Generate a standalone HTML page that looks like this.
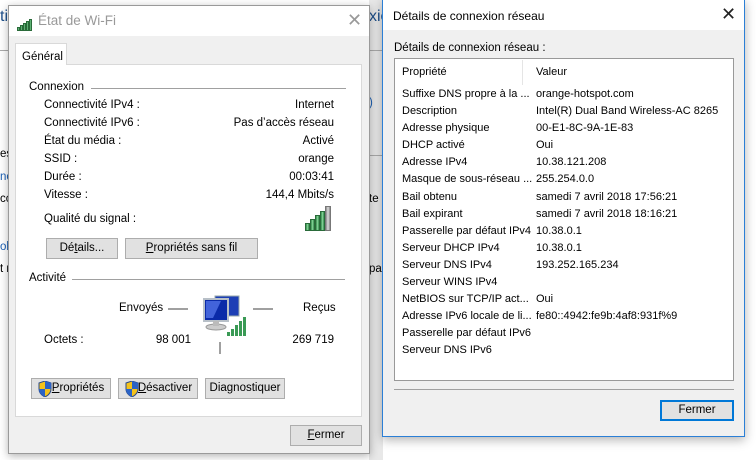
<!DOCTYPE html>
<html><head><meta charset="utf-8"><style>
*{margin:0;padding:0;box-sizing:border-box}
body{width:756px;height:460px;background:#fff;position:relative;overflow:hidden;font-family:"Liberation Sans",sans-serif;font-size:11.5px;color:#000}
.a{position:absolute;white-space:nowrap}
.r{text-align:right}
.btn{position:absolute;background:#e1e1e1;border:1px solid #adadad;text-align:center;line-height:18px;font-size:11.5px}
.bar{position:absolute;background:linear-gradient(90deg,#2e8b47,#8fd8a0 50%,#2e8b47);border:1px solid #2a6b3a}
</style></head><body>
<div class="a" style="left:0;top:8px;font-size:16px;color:#1e4f8a">tic</div>
<div class="a" style="left:0;top:50px;width:8px;height:1px;background:#aaa"></div>
<div class="a" style="left:0;top:148px;color:#000">es</div>
<div class="a" style="left:0;top:171px;color:#1a5fb4">nc</div>
<div class="a" style="left:0;top:193px;color:#000">cc</div>
<div class="a" style="left:0;top:241px;color:#1a5fb4">ob</div>
<div class="a" style="left:0;top:263px;color:#000">t r</div>
<div class="a" style="left:369px;top:0;width:14px;height:460px;background:#e8e8e8"></div>
<div class="a" style="left:369px;top:8px;font-size:16px;color:#1e4f8a">xic</div>
<div class="a" style="left:369px;top:50px;width:14px;height:1px;background:#aaa"></div>
<div class="a" style="left:369px;top:155px;width:14px;height:1px;background:#aaa"></div>
<div class="a" style="left:369px;top:97px;color:#1a5fb4">)</div>
<div class="a" style="left:369px;top:193px">te</div>
<div class="a" style="left:369px;top:263px">pa</div>

<div class="a" style="left:8px;top:5px;width:362px;height:449px;background:#f0f0f0;border:1px solid #9a9a9a;box-shadow:0 2px 8px rgba(0,0,0,.3)">
 <div class="a" style="left:0;top:0;width:360px;height:30px;background:#fff"></div>
 <div class="a" style="left:8px;top:14px;width:17px;height:11px">
  <div class="bar" style="left:0;top:7px;width:3px;height:4px"></div>
  <div class="bar" style="left:3px;top:5px;width:3px;height:6px"></div>
  <div class="bar" style="left:6px;top:3px;width:3px;height:8px"></div>
  <div class="bar" style="left:9px;top:1px;width:3px;height:10px"></div>
  <div class="bar" style="left:12px;top:-1px;width:3px;height:12px"></div>
 </div>
 <div class="a" style="left:29px;top:7px;font-size:13.5px;color:#999">État de Wi-Fi</div>
 <div class="a" style="left:338px;top:4px;font-size:18px;color:#999">✕</div>
 <div class="a" style="left:6px;top:37px;width:52px;height:22px;background:#fff;border:1px solid #d9d9d9;border-bottom:none;z-index:2;padding:8px 0 0 6px;line-height:10px">Général</div>
 <div class="a" style="left:6px;top:58px;width:347px;height:353px;background:#fff;border:1px solid #d9d9d9"></div>
 <div class="a" style="left:20px;top:75px">Connexion</div>
 <div class="a" style="left:82px;top:82px;width:255px;height:1px;background:#a0a0a0"></div>
 <div class="a" style="left:35px;top:93px">Connectivité IPv4 :</div>
 <div class="a" style="left:35px;top:111px">Connectivité IPv6 :</div>
 <div class="a" style="left:35px;top:129px">État du média :</div>
 <div class="a" style="left:35px;top:147px">SSID :</div>
 <div class="a" style="left:35px;top:165px">Durée :</div>
 <div class="a" style="left:35px;top:183px">Vitesse :</div>
 <div class="a" style="left:35px;top:207px">Qualité du signal :</div>
 <div class="a r" style="left:150px;width:175px;top:93px">Internet</div>
 <div class="a r" style="left:150px;width:175px;top:111px">Pas d’accès réseau</div>
 <div class="a r" style="left:150px;width:175px;top:129px">Activé</div>
 <div class="a r" style="left:150px;width:175px;top:147px">orange</div>
 <div class="a r" style="left:150px;width:175px;top:165px">00:03:41</div>
 <div class="a r" style="left:150px;width:175px;top:183px">144,4 Mbits/s</div>
 <div class="a" style="left:296px;top:200px;width:30px;height:25px">
  <div class="bar" style="left:0;top:17px;width:5px;height:8px"></div>
  <div class="bar" style="left:5px;top:13px;width:5px;height:12px"></div>
  <div class="bar" style="left:10px;top:9px;width:5px;height:16px"></div>
  <div class="bar" style="left:15px;top:5px;width:5px;height:20px"></div>
  <div class="a" style="left:20px;top:0;width:6px;height:25px;background:linear-gradient(90deg,#888,#ddd,#888);border:1px solid #777"></div>
 </div>
 <div class="btn" style="left:37px;top:232px;width:72px;height:21px">Dé<u>t</u>ails...</div>
 <div class="btn" style="left:116px;top:232px;width:133px;height:21px"><u>P</u>ropriétés sans fil</div>
 <div class="a" style="left:20px;top:266px">Activité</div>
 <div class="a" style="left:63px;top:273px;width:273px;height:1px;background:#a0a0a0"></div>
 <div class="a" style="left:110px;top:296px">Envoyés</div>
 <div class="a" style="left:159px;top:302px;width:20px;height:2px;background:#a0a0a0"></div>
 <div class="a" style="left:244px;top:302px;width:20px;height:2px;background:#a0a0a0"></div>
 <div class="a" style="left:294px;top:296px">Reçus</div>
 <svg class="a" style="left:192px;top:288px" width="48" height="46" viewBox="0 0 48 46">
  <rect x="14" y="2" width="24" height="20" fill="#1d3fb5" stroke="#9aa" />
  <rect x="3" y="5" width="24" height="22" fill="#0a2aa8" stroke="#b8c0c8" stroke-width="2"/>
  <path d="M5 7 L20 7 L12 24 L5 24Z" fill="#5a7cf0" opacity=".7"/>
  <ellipse cx="15" cy="33" rx="10" ry="3" fill="#ccc" stroke="#999"/>
  <rect x="12" y="27" width="6" height="5" fill="#bbb"/>
  <rect x="26" y="38" width="3" height="4" fill="#3a9a55"/>
  <rect x="30" y="35" width="3" height="7" fill="#3a9a55"/>
  <rect x="34" y="31" width="3" height="11" fill="#3a9a55"/>
  <rect x="38" y="27" width="3" height="15" fill="#3a9a55"/>
  <rect x="42" y="23" width="3" height="19" fill="#3a9a55"/>
 </svg>
 <div class="a" style="left:35px;top:328px">Octets :</div>
 <div class="a r" style="left:110px;width:72px;top:328px">98 001</div>
 <div class="a r" style="left:250px;width:75px;top:328px">269 719</div>
 <div class="a" style="left:210px;top:336px;width:2px;height:12px;background:#a0a0a0"></div>
 <div class="btn" style="left:22px;top:372px;width:80px;height:21px;padding-left:14px"><u>P</u>ropriétés</div>
 <div class="btn" style="left:109px;top:372px;width:80px;height:21px;padding-left:14px"><u>D</u>ésactiver</div>
 <div class="btn" style="left:196px;top:372px;width:80px;height:21px">Diagnostiquer</div>
 <svg class="a" style="left:29px;top:375px" width="14" height="16" viewBox="0 0 14 16"><path d="M7 0 L13 2 L13 8 Q13 13 7 16 Q1 13 1 8 L1 2Z" fill="#f4c21a" stroke="#2a4a8a"/><path d="M7 0 L13 2 L13 8 L7 8Z M7 8 L7 16 Q1 13 1 8Z" fill="#2b63c6"/></svg>
 <svg class="a" style="left:116px;top:375px" width="14" height="16" viewBox="0 0 14 16"><path d="M7 0 L13 2 L13 8 Q13 13 7 16 Q1 13 1 8 L1 2Z" fill="#f4c21a" stroke="#2a4a8a"/><path d="M7 0 L13 2 L13 8 L7 8Z M7 8 L7 16 Q1 13 1 8Z" fill="#2b63c6"/></svg>
 <div class="btn" style="left:281px;top:419px;width:72px;height:21px"><u>F</u>ermer</div>
</div>

<div class="a" style="left:382px;top:-1px;width:363px;height:438px;background:#f0f0f0;border:1px solid #2b7fd6;box-shadow:0 3px 10px rgba(0,0,0,.3)">
 <div class="a" style="left:0;top:0;width:361px;height:30px;background:#fff"></div>
 <div class="a" style="left:10px;top:9px;font-size:12px">Détails de connexion réseau</div>
 <div class="a" style="left:338px;top:4px;font-size:18px;color:#222">✕</div>
 <div class="a" style="left:11px;top:42px">Détails de connexion réseau :</div>
 <div class="a" style="left:11px;top:58px;width:340px;height:323px;background:#fff;border:1px solid #999"></div>
 <div class="a" style="left:139px;top:60px;width:1px;height:25px;background:#e5e5e5"></div>
 <div class="a" style="left:19px;top:66px;font-size:11px">Propriété</div>
 <div class="a" style="left:153px;top:66px;font-size:11px">Valeur</div>
 <div class="a" style="left:19px;top:86px;line-height:17.1px;font-size:11px;width:130px;overflow:hidden">Suffixe DNS propre à la ...<br>Description<br>Adresse physique<br>DHCP activé<br>Adresse IPv4<br>Masque de sous-réseau ...<br>Bail obtenu<br>Bail expirant<br>Passerelle par défaut IPv4<br>Serveur DHCP IPv4<br>Serveur DNS IPv4<br>Serveur WINS IPv4<br>NetBIOS sur TCP/IP act...<br>Adresse IPv6 locale de li...<br>Passerelle par défaut IPv6<br>Serveur DNS IPv6</div>
 <div class="a" style="left:153px;top:86px;line-height:17.1px;font-size:11px">orange-hotspot.com<br>Intel(R) Dual Band Wireless-AC 8265<br>00-E1-8C-9A-1E-83<br>Oui<br>10.38.121.208<br>255.254.0.0<br>samedi 7 avril 2018 17:56:21<br>samedi 7 avril 2018 18:16:21<br>10.38.0.1<br>10.38.0.1<br>193.252.165.234<br><br>Oui<br>fe80::4942:fe9b:4af8:931f%9</div>
 <div class="a" style="left:11px;top:389px;width:340px;height:1px;background:#a0a0a0"></div>
 <div class="btn" style="left:277px;top:400px;width:74px;height:21px;border:2px solid #0078d7;line-height:17px">Fermer</div>
</div>
</body></html>
